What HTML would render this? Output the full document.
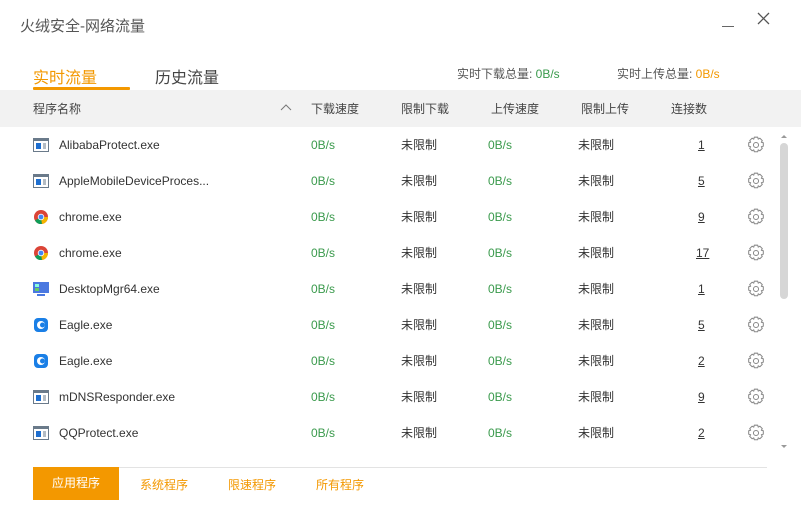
<!DOCTYPE html>
<html><head><meta charset="utf-8"><style>
*{margin:0;padding:0;box-sizing:border-box}
body{width:801px;height:513px;background:#fff;font-family:"Liberation Sans","Noto Sans CJK SC",sans-serif;font-size:12px;color:#333;position:relative;overflow:hidden}
.a{position:absolute;white-space:nowrap}
.g{color:#3a9a4c}
.o{color:#f39800}
.hd{position:absolute;left:0;top:90px;width:801px;height:37px;background:#f2f2f2}
.row{position:absolute;left:0;width:770px;height:36px}
.row .a{top:10px;line-height:16px}
.ic{position:absolute;left:33px;top:11px;width:16px;height:14px}
u{text-decoration:underline}
</style></head><body>
<div class="a" style="left:20px;top:15px;font-size:15px;color:#555">火绒安全-网络流量</div>
<div class="a" style="left:722px;top:26px;width:12px;height:1px;background:#666"></div>
<svg class="a" style="left:757px;top:12px" width="13" height="13"><path d="M1 1L12 12M12 1L1 12" stroke="#555" stroke-width="1.3"/></svg>
<div class="a o" style="left:33px;top:64px;font-size:16px">实时流量</div>
<div class="a" style="left:155px;top:64px;font-size:16px;color:#444">历史流量</div>
<div class="a" style="left:33px;top:87px;width:97px;height:3px;background:#f39800;border-radius:1px"></div>
<div class="a" style="left:457px;top:65px;color:#555">实时下载总量: <span class="g">0B/s</span></div>
<div class="a" style="left:617px;top:65px;color:#555">实时上传总量: <span class="o">0B/s</span></div>
<div class="hd"></div>
<div class="a" style="left:33px;top:100px;color:#444">程序名称</div>
<svg class="a" style="left:280px;top:103px" width="12" height="8"><path d="M1 7L6 2L11 7" fill="none" stroke="#777" stroke-width="1"/></svg>
<div class="a" style="left:311px;top:100px;color:#444">下载速度</div>
<div class="a" style="left:401px;top:100px;color:#444">限制下载</div>
<div class="a" style="left:491px;top:100px;color:#444">上传速度</div>
<div class="a" style="left:581px;top:100px;color:#444">限制上传</div>
<div class="a" style="left:671px;top:100px;color:#444">连接数</div>

<div class="row" style="top:127px"><svg class="ic" viewBox="0 0 16 14"><rect x=".5" y=".5" width="15" height="13" fill="#fff" stroke="#6a7a8a"/><rect x="1" y="1" width="14" height="2" fill="#6a7a8a"/><rect x="3" y="5" width="5" height="6" fill="#1e6fd0"/><path d="M10 6h3M10 8h3M10 10h3" stroke="#6a7a8a"/></svg><div class="a" style="left:59px">AlibabaProtect.exe</div><div class="a g" style="left:311px">0B/s</div><div class="a" style="left:401px">未限制</div><div class="a g" style="left:488px">0B/s</div><div class="a" style="left:578px">未限制</div><div class="a" style="left:698px"><u>1</u></div></div>
<div class="row" style="top:163px"><svg class="ic" viewBox="0 0 16 14"><rect x=".5" y=".5" width="15" height="13" fill="#fff" stroke="#6a7a8a"/><rect x="1" y="1" width="14" height="2" fill="#6a7a8a"/><rect x="3" y="5" width="5" height="6" fill="#1e6fd0"/><path d="M10 6h3M10 8h3M10 10h3" stroke="#6a7a8a"/></svg><div class="a" style="left:59px">AppleMobileDeviceProces...</div><div class="a g" style="left:311px">0B/s</div><div class="a" style="left:401px">未限制</div><div class="a g" style="left:488px">0B/s</div><div class="a" style="left:578px">未限制</div><div class="a" style="left:698px"><u>5</u></div></div>
<div class="row" style="top:199px"><svg class="ic" viewBox="0 0 16 14"><circle cx="8" cy="7" r="7" fill="#db4437"/><path d="M8 7L2 10.5A7 7 0 0 0 9 14Z" fill="#0f9d58"/><path d="M8 7L15 7A7 7 0 0 1 9 14Z" fill="#f4b400"/><circle cx="8" cy="7" r="3.2" fill="#fff"/><circle cx="8" cy="7" r="2.4" fill="#4285f4"/></svg><div class="a" style="left:59px">chrome.exe</div><div class="a g" style="left:311px">0B/s</div><div class="a" style="left:401px">未限制</div><div class="a g" style="left:488px">0B/s</div><div class="a" style="left:578px">未限制</div><div class="a" style="left:698px"><u>9</u></div></div>
<div class="row" style="top:235px"><svg class="ic" viewBox="0 0 16 14"><circle cx="8" cy="7" r="7" fill="#db4437"/><path d="M8 7L2 10.5A7 7 0 0 0 9 14Z" fill="#0f9d58"/><path d="M8 7L15 7A7 7 0 0 1 9 14Z" fill="#f4b400"/><circle cx="8" cy="7" r="3.2" fill="#fff"/><circle cx="8" cy="7" r="2.4" fill="#4285f4"/></svg><div class="a" style="left:59px">chrome.exe</div><div class="a g" style="left:311px">0B/s</div><div class="a" style="left:401px">未限制</div><div class="a g" style="left:488px">0B/s</div><div class="a" style="left:578px">未限制</div><div class="a" style="left:696px"><u>17</u></div></div>
<div class="row" style="top:271px"><svg class="ic" viewBox="0 0 16 14"><rect x="0" y="0" width="16" height="11" fill="#4a78e0"/><rect x="2" y="2" width="4" height="3" fill="#8fd"/><rect x="2" y="6" width="4" height="3" fill="#6c6"/><rect x="4" y="12" width="8" height="2" fill="#4a78e0"/></svg><div class="a" style="left:59px">DesktopMgr64.exe</div><div class="a g" style="left:311px">0B/s</div><div class="a" style="left:401px">未限制</div><div class="a g" style="left:488px">0B/s</div><div class="a" style="left:578px">未限制</div><div class="a" style="left:698px"><u>1</u></div></div>
<div class="row" style="top:307px"><svg class="ic" viewBox="0 0 16 14"><rect x="1" y="0" width="14" height="14" rx="4" fill="#1a7fe6"/><circle cx="8" cy="7" r="4" fill="#fff"/><circle cx="9.5" cy="7" r="2.5" fill="#1a7fe6"/></svg><div class="a" style="left:59px">Eagle.exe</div><div class="a g" style="left:311px">0B/s</div><div class="a" style="left:401px">未限制</div><div class="a g" style="left:488px">0B/s</div><div class="a" style="left:578px">未限制</div><div class="a" style="left:698px"><u>5</u></div></div>
<div class="row" style="top:343px"><svg class="ic" viewBox="0 0 16 14"><rect x="1" y="0" width="14" height="14" rx="4" fill="#1a7fe6"/><circle cx="8" cy="7" r="4" fill="#fff"/><circle cx="9.5" cy="7" r="2.5" fill="#1a7fe6"/></svg><div class="a" style="left:59px">Eagle.exe</div><div class="a g" style="left:311px">0B/s</div><div class="a" style="left:401px">未限制</div><div class="a g" style="left:488px">0B/s</div><div class="a" style="left:578px">未限制</div><div class="a" style="left:698px"><u>2</u></div></div>
<div class="row" style="top:379px"><svg class="ic" viewBox="0 0 16 14"><rect x=".5" y=".5" width="15" height="13" fill="#fff" stroke="#6a7a8a"/><rect x="1" y="1" width="14" height="2" fill="#6a7a8a"/><rect x="3" y="5" width="5" height="6" fill="#1e6fd0"/><path d="M10 6h3M10 8h3M10 10h3" stroke="#6a7a8a"/></svg><div class="a" style="left:59px">mDNSResponder.exe</div><div class="a g" style="left:311px">0B/s</div><div class="a" style="left:401px">未限制</div><div class="a g" style="left:488px">0B/s</div><div class="a" style="left:578px">未限制</div><div class="a" style="left:698px"><u>9</u></div></div>
<div class="row" style="top:415px"><svg class="ic" viewBox="0 0 16 14"><rect x=".5" y=".5" width="15" height="13" fill="#fff" stroke="#6a7a8a"/><rect x="1" y="1" width="14" height="2" fill="#6a7a8a"/><rect x="3" y="5" width="5" height="6" fill="#1e6fd0"/><path d="M10 6h3M10 8h3M10 10h3" stroke="#6a7a8a"/></svg><div class="a" style="left:59px">QQProtect.exe</div><div class="a g" style="left:311px">0B/s</div><div class="a" style="left:401px">未限制</div><div class="a g" style="left:488px">0B/s</div><div class="a" style="left:578px">未限制</div><div class="a" style="left:698px"><u>2</u></div></div>

<svg class="a" style="left:746px;top:135px" width="20" height="310">
<defs><g id="gear" transform="translate(1.5 1.5) scale(0.85)"><path d="M8 0.8h4l0.6 2.3 2-1.1 2.8 2.8-1.1 2 2.3 0.6v4l-2.3 0.6 1.1 2-2.8 2.8-2-1.1-0.6 2.3h-4l-0.6-2.3-2 1.1-2.8-2.8 1.1-2-2.3-0.6v-4l2.3-0.6-1.1-2 2.8-2.8 2 1.1z" fill="none" stroke="#888" stroke-width="1.2" stroke-linejoin="round"/><circle cx="10" cy="10" r="3" fill="none" stroke="#888" stroke-width="1.2"/></g></defs>
<use href="#gear" y="0"/><use href="#gear" y="36"/><use href="#gear" y="72"/><use href="#gear" y="108"/><use href="#gear" y="144"/><use href="#gear" y="180"/><use href="#gear" y="216"/><use href="#gear" y="252"/><use href="#gear" y="288"/>
</svg>
<svg class="a" style="left:780px;top:133px" width="8" height="6"><path d="M1 5L4 2L7 5Z" fill="#999"/></svg>
<div class="a" style="left:780px;top:143px;width:8px;height:156px;background:#d6d6d6;border-radius:4px"></div>
<svg class="a" style="left:780px;top:444px" width="8" height="6"><path d="M1 1L4 4L7 1Z" fill="#999"/></svg>
<div class="a" style="left:33px;top:467px;width:734px;height:1px;background:#e3e3e3"></div>
<div class="a" style="left:33px;top:467px;width:86px;height:33px;background:#f39800;color:#fff;text-align:center;line-height:33px">应用程序</div>
<div class="a o" style="left:140px;top:476px">系统程序</div>
<div class="a o" style="left:228px;top:476px">限速程序</div>
<div class="a o" style="left:316px;top:476px">所有程序</div>
</body></html>
